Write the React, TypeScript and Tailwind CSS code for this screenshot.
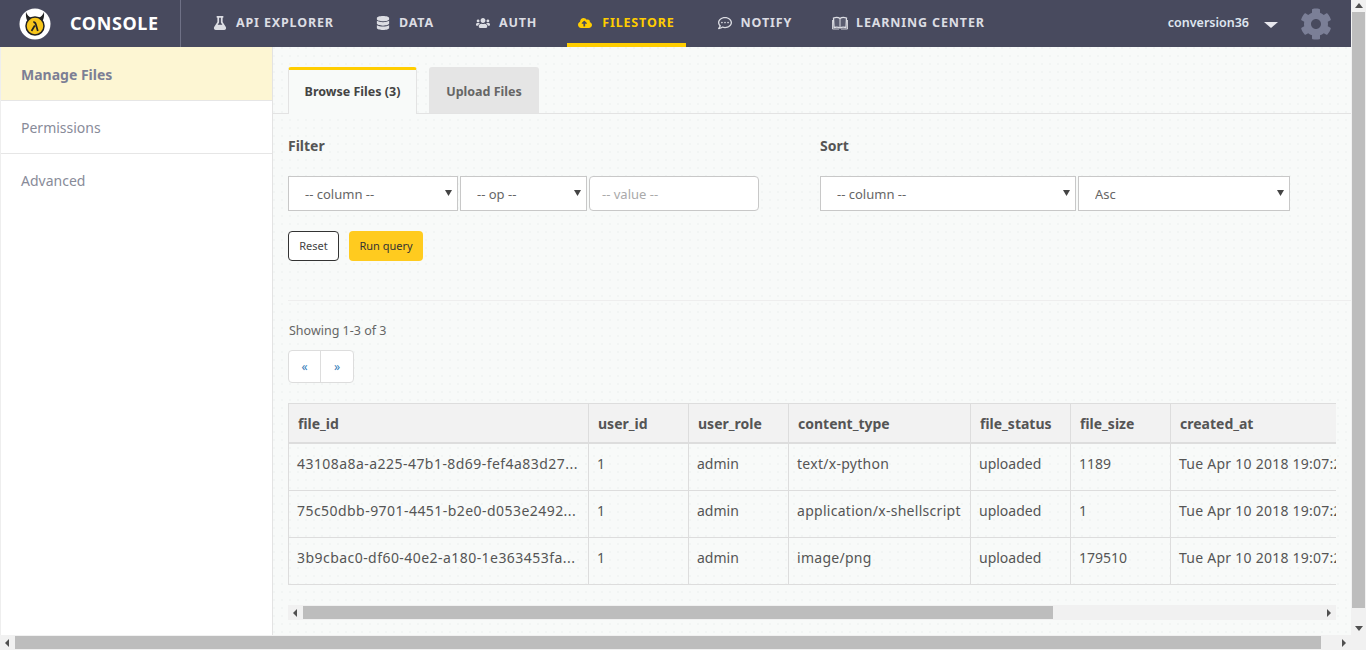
import { FaFlask, FaDatabase, FaUsers, FaCloudUploadAlt, FaRegCommentDots, FaCog } from "react-icons/fa";

function BookIcon({ className }: { className?: string }) {
  return (
    <svg className={className} width="16" height="14" viewBox="0 0 16 14">
      <path d="M1.500 2 L2 11.500 C4 11 6.500 11 8 12 C9.500 11 12 11 14 11.500 L14.500 2 C12.500 1.200 9.500 1.300 8 2.500 C6.500 1.300 3.500 1.200 1.500 2 Z" fill="#5a5c70" stroke="#dcdde3" strokeWidth="1.300" />
      <path d="M8 2.500 L8 12" stroke="#dcdde3" strokeWidth="1" />
      <path d="M0.500 4 L0.500 13 L7 13 M15.500 4 L15.500 13 L9 13" fill="none" stroke="#dcdde3" strokeWidth="0.900" />
    </svg>
  );
}

const nav = [
  { label: "API EXPLORER", Icon: FaFlask, cls: "gap-[9px]" },
  { label: "DATA", Icon: FaDatabase, cls: "ml-[20px] gap-[9px]" },
  { label: "AUTH", Icon: FaUsers, cls: "ml-[20px] gap-[9px]" },
  { label: "FILESTORE", Icon: FaCloudUploadAlt, cls: "ml-[19px] gap-[10px]", active: true },
  { label: "NOTIFY", Icon: FaRegCommentDots, cls: "ml-[21px] gap-[9px]" },
  { label: "LEARNING CENTER", Icon: BookIcon, cls: "ml-[18px] gap-[8px]" },
];

const cols = [
  { name: "file_id", w: "w-[300px]", t: "tracking-[0.45px]" },
  { name: "user_id", w: "w-[100px]", t: "" },
  { name: "user_role", w: "w-[100px]", t: "" },
  { name: "content_type", w: "w-[182px]", t: "tracking-[0.28px]" },
  { name: "file_status", w: "w-[100px]", t: "" },
  { name: "file_size", w: "w-[100px]", t: "" },
  { name: "created_at", w: "w-[200px]", t: "tracking-[0.25px]" },
];

const rows = [
  ["43108a8a-a225-47b1-8d69-fef4a83d27...", "1", "admin", "text/x-python", "uploaded", "1189", "Tue Apr 10 2018 19:07:23"],
  ["75c50dbb-9701-4451-b2e0-d053e2492...", "1", "admin", "application/x-shellscript", "uploaded", "1", "Tue Apr 10 2018 19:07:23"],
  ["3b9cbac0-df60-40e2-a180-1e363453fa...", "1", "admin", "image/png", "uploaded", "179510", "Tue Apr 10 2018 19:07:23"],
];

function Tri({ dir }: { dir: "l" | "r" | "u" | "d" }) {
  const pts = { l: "6,1 6,9 2,5", r: "3,1 3,9 7,5", u: "1,7 9,7 5,2", d: "1,3 9,3 5,8" }[dir];
  return (
    <svg width="10" height="10" viewBox="0 0 10 10">
      <polygon points={pts} fill="#505050" />
    </svg>
  );
}

function Select({ label, w }: { label: string; w: string }) {
  return (
    <div className={`${w} relative h-[35px]`}>
      <select className="h-full w-full appearance-none rounded-none border border-[#c8c8c8] bg-white pl-[16px] pt-[2px] text-[13px] text-[#666]" defaultValue={label}>
        <option>{label}</option>
      </select>
      <svg className="pointer-events-none absolute right-[6px] top-[14px]" width="7" height="6" viewBox="0 0 7 6">
        <polygon points="0,0 7,0 3.500,6" fill="#444" />
      </svg>
    </div>
  );
}

function Logo() {
  return (
    <svg width="32" height="32" viewBox="0 0 32 32">
      <circle cx="16" cy="16" r="15.500" fill="#fff" />
      <path d="M7 4 C6.500 10 8 13.500 11 15 L21 15 C24 13.500 25.500 10 25 4 C24 7 22 9 19.500 9.800 L12.500 9.800 C10 9 8 7 7 4 Z" fill="#222" />
      <circle cx="16" cy="18" r="9" fill="#f7c61b" stroke="#222" strokeWidth="1.500" />
      <path d="M12.500 23 L15.800 17.500 M14.300 14.200 C15.800 14 16.500 15 17 16.800 L18.800 23" fill="none" stroke="#222" strokeWidth="1.700" />
    </svg>
  );
}

export default function App() {
  return (
    <div className="flex h-[650px] w-[1366px] flex-col overflow-hidden bg-[#f1f1f1] font-['Noto_Sans',sans-serif]">
      <div className="flex h-[635px] w-full">
        <div className="flex w-[1351px] flex-col bg-[#f8faf9]">
          <header className="flex h-[47px] items-stretch bg-[#484a5e]">
            <div className="flex w-[181px] items-center border-r border-[#6f7186] pl-[19px]">
              <Logo />
              <span className="ml-[19px] text-[18px] font-bold tracking-[0.63px] text-white">CONSOLE</span>
            </div>
            <div className="ml-[21px] flex">
              {nav.map(({ label, Icon, cls, active }) => (
                <div
                  key={label}
                  className={`flex items-center justify-center border-b-[4px] px-[11px] pt-[3px] text-[12.500px] font-bold tracking-[0.85px] ${cls} ${active ? "border-[#ffcd00] text-[#ffcd00]" : "border-transparent text-[#dcdde3]"}`}
                >
                  <Icon className="text-[14px]" />
                  <span>{label}</span>
                </div>
              ))}
            </div>
            <div className="ml-auto flex items-center">
              <span className="text-[12.500px] font-semibold text-[#dfe6f0]">conversion36</span>
              <span className="ml-[15px] mt-[3px] h-0 w-0 border-x-[7px] border-t-[6px] border-x-transparent border-t-[#e8e8ee]" />
              <FaCog className="ml-[22px] mr-[19px] text-[32px] text-[#7b7f97]" />
            </div>
          </header>
          <div className="flex min-h-0 flex-1">
            <aside className="w-[273px] shrink-0 border-x border-r-[#e3e3e3] border-l-[#eee] bg-white text-[14px] text-[#888b99]">
              <div className="flex h-[54px] items-center border-b border-[#e6e6e6] bg-[#fdf6d3] pl-[20px] pt-[2px] font-bold text-[#7c7f95]">Manage Files</div>
              <div className="flex h-[53px] items-center border-b border-[#e6e6e6] pl-[20px]">Permissions</div>
              <div className="flex h-[53px] items-center pl-[20px]">Advanced</div>
            </aside>
            <main className="min-w-0 flex-1 overflow-hidden bg-[radial-gradient(circle_at_1px_1px,#f2f5f4_1px,transparent_1px)] bg-[length:8px_8px] text-[#555]">
              <div className="h-[20px]" />
              <div className="flex h-[47px] items-stretch border-b border-[#e3e3e3] pl-[15px]">
                <div className="-mb-px flex w-[129px] items-center justify-center rounded-t-[3px] border-x border-t-[3px] border-x-[#e3e3e3] border-t-[#ffcd00] bg-[#f8faf9] text-[12.500px] font-bold text-[#444]">
                  Browse Files (3)
                </div>
                <div className="ml-[12px] flex w-[110px] items-center justify-center rounded-t-[3px] bg-[#e5e5e5] pt-[4px] text-[12.500px] font-bold text-[#666]">
                  Upload Files
                </div>
              </div>
              <div className="pl-[15px]">
                <div className="flex pt-[22px]">
                  <div className="w-[532px]">
                    <div className="h-[40px] text-[14px] leading-[19px] font-bold text-[#555]">Filter</div>
                    <div className="flex gap-[2px]">
                      <Select label="-- column --" w="w-[170px]" />
                      <Select label="-- op --" w="w-[127px]" />
                      <input placeholder="-- value --" className="h-[35px] w-[170px] rounded-[4px] border border-[#c8c8c8] bg-white pl-[12px] text-[13px] placeholder:text-[#aaa]" />
                    </div>
                  </div>
                  <div>
                    <div className="h-[40px] text-[14px] leading-[19px] font-bold text-[#555]">Sort</div>
                    <div className="flex gap-[2px]">
                      <Select label="-- column --" w="w-[256px]" />
                      <Select label="Asc" w="w-[212px]" />
                    </div>
                  </div>
                </div>
                <div className="mt-[20px] flex gap-[10px]">
                  <div className="flex h-[30px] w-[51px] items-center justify-center rounded-[4px] border border-[#333] bg-white text-[11px] text-[#444]">Reset</div>
                  <div className="flex h-[30px] w-[74px] items-center justify-center rounded-[4px] bg-[#ffcb1f] text-[11px] text-[#333]">Run query</div>
                </div>
              </div>
              <div className="mt-[39px] ml-[15px] border-t border-[#eeeeee]" />
              <div className="pl-[15px]">
                <div className="mt-[21px] pl-[1px] text-[12.500px] leading-[18px] text-[#666]">Showing 1-3 of 3</div>
                <div className="mt-[10px] flex h-[33px] w-[66px] rounded-[4px] border border-[#ddd] bg-white text-[12px] text-[#337ab7]">
                  <div className="flex w-[32px] items-center justify-center border-r border-[#ddd]">«</div>
                  <div className="flex flex-1 items-center justify-center">»</div>
                </div>
                <div className="mt-[20px] w-[1048px] overflow-hidden">
                  <div className="w-[1182px] border border-[#ddd] border-r-0 text-[14px] text-[#555]">
                    <div className="flex h-[40px] border-b-2 border-[#ddd] bg-[#f2f2f2] font-bold">
                      {cols.map((c) => (
                        <div key={c.name} className={`${c.w} flex items-center border-r border-[#ddd] pl-[9px] shrink-0`}>{c.name}</div>
                      ))}
                    </div>
                    {rows.map((r, i) => (
                      <div key={i} className={`flex ${i < 2 ? "h-[47px] border-b border-[#ddd]" : "h-[46px]"}`}>
                        {r.map((v, j) => (
                          <div key={j} className={`${cols[j].w} ${cols[j].t} overflow-hidden border-r border-[#ddd] pl-[8px] pt-[9px] shrink-0 whitespace-nowrap`}>{v}</div>
                        ))}
                      </div>
                    ))}
                  </div>
                </div>
                <div className="mt-[20px] flex h-[15px] w-[1048px] items-center bg-[#f1f1f1]">
                  <div className="flex w-[15px] justify-center"><Tri dir="l" /></div>
                  <div className="h-[13px] w-[750px] bg-[#bdbdbd]" />
                  <div className="ml-auto flex w-[15px] justify-center"><Tri dir="r" /></div>
                </div>
              </div>
            </main>
          </div>
        </div>
        <div className="flex h-full w-[15px] flex-col items-center bg-[#f1f1f1]">
          <div className="flex h-[12px] items-center"><Tri dir="u" /></div>
          <div className="h-[596px] w-[13px] bg-[#bdbdbd]" />
          <div className="mt-auto flex h-[15px] items-center"><Tri dir="d" /></div>
        </div>
      </div>
      <div className="flex h-[15px] w-full items-center bg-[#f1f1f1]">
        <div className="flex w-[15px] justify-center"><Tri dir="l" /></div>
        <div className="h-[13px] w-[1306px] bg-[#bdbdbd]" />
        <div className="ml-auto mr-[15px] flex w-[15px] justify-center"><Tri dir="r" /></div>
      </div>
    </div>
  );
}
